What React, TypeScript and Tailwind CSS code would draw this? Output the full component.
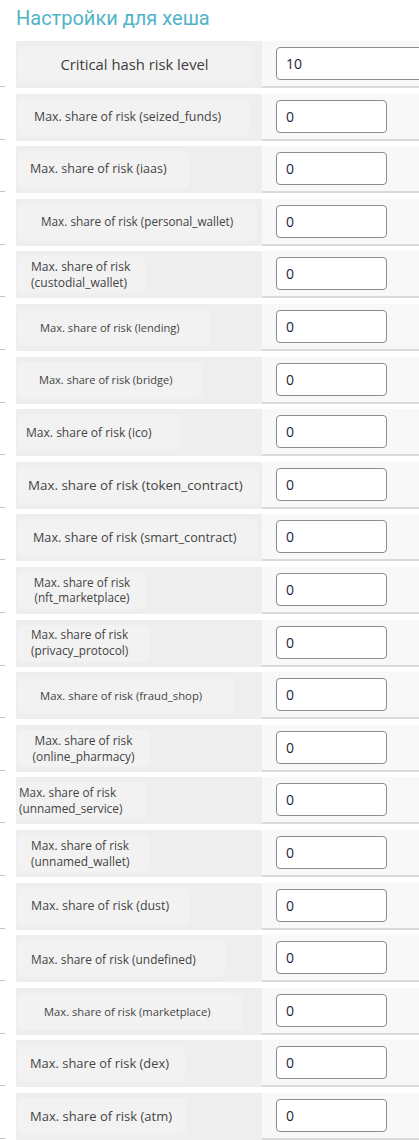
const rows: { label: string; two?: boolean; fs: number; pl: number; w: number; center?: boolean }[] = [
  { label: "Max. share of risk (seized_funds)", fs: 12.4, pl: 17, w: 232 },
  { label: "Max. share of risk (iaas)", fs: 12.5, pl: 13, w: 172 },
  { label: "Max. share of risk (personal_wallet)", fs: 11.75, pl: 24, w: 240 },
  { label: "Max. share of risk|(custodial_wallet)", two: true, fs: 12.05, pl: 14, w: 128 },
  { label: "Max. share of risk (lending)", fs: 11.15, pl: 23, w: 193 },
  { label: "Max. share of risk (bridge)", fs: 11.05, pl: 22, w: 186 },
  { label: "Max. share of risk (ico)", fs: 12.05, pl: 9, w: 163 },
  { label: "Max. share of risk (token_contract)", fs: 13.4, pl: 11, w: 242 },
  { label: "Max. share of risk (smart_contract)", fs: 12.65, pl: 16, w: 241 },
  { label: "Max. share of risk|(nft_marketplace)", two: true, fs: 11.7, pl: 17, w: 130, center: true },
  { label: "Max. share of risk|(privacy_protocol)", two: true, fs: 11.8, pl: 14, w: 132 },
  { label: "Max. share of risk (fraud_shop)", fs: 11.3, pl: 23, w: 218 },
  { label: "Max. share of risk|(online_pharmacy)", two: true, fs: 11.9, pl: 13, w: 133, center: true },
  { label: "Max. share of risk|(unnamed_service)", two: true, fs: 11.8, pl: 2, w: 130 },
  { label: "Max. share of risk|(unnamed_wallet)", two: true, fs: 11.9, pl: 14, w: 133 },
  { label: "Max. share of risk (dust)", fs: 12.4, pl: 14, w: 173 },
  { label: "Max. share of risk (undefined)", fs: 11.9, pl: 14, w: 208 },
  { label: "Max. share of risk (marketplace)", fs: 11.2, pl: 27, w: 226 },
  { label: "Max. share of risk (dex)", fs: 12.9, pl: 13, w: 168 },
  { label: "Max. share of risk (atm)", fs: 13, pl: 13, w: 170 },
];

function Row({ children, value, wide }: { children: React.ReactNode; value: string; wide?: boolean }) {
  return (
    <div className="flex h-[47px]">
      <div className="w-[5px] shrink-0 flex flex-col justify-end pb-[1px]">
        <div className="border-b border-[#c4c4c4]"></div>
      </div>
      <div className="w-[11px] shrink-0"></div>
      <div className="w-[246px] shrink-0 bg-[#eeeeee] py-[5px] pl-[1px]">{children}</div>
      <div className="flex-1 bg-[#f8f8f8] border-b-2 border-[#dadada] pl-[14px] pt-[6px]">
        <div
          className={`h-[33px] ${wide ? "w-[160px] rounded-l-[4px]" : "w-[111px] rounded-[4px]"} bg-white border border-[#8c8c8c] pl-[9px] flex items-center text-[14px] text-[#1c2636]`}
          style={{ fontFamily: '"Open Sans", sans-serif' }}
        >
          {value}
        </div>
      </div>
    </div>
  );
}

export default function App() {
  return (
    <div className="w-[419px] h-[1140px] overflow-hidden bg-white" style={{ fontFamily: '"Open Sans", sans-serif' }}>
      <h2
        className="pl-[16px] pt-[3px] h-[41px] text-[20px] leading-[30px] text-[#4fb4c8]"
        style={{ fontFamily: 'Roboto, "Noto Sans", sans-serif' }}
      >
        Настройки для хеша
      </h2>

      <div className="flex flex-col gap-[5.6px]">
        <Row value="10" wide>
          <div className="h-full w-[235px] rounded-[6px] bg-[#f2f2f2] flex items-center justify-center text-[14.8px] text-[#3d3d3d]">
            Critical hash risk level
          </div>
        </Row>

        {rows.map((r) => (
          <Row key={r.label} value="0">
            <div
              className={`h-full rounded-[6px] bg-[#f2f2f2] flex flex-col justify-center text-[#444] leading-[1.35] ${r.center ? "items-center" : "items-start"}`}
              style={{ width: r.w, paddingLeft: r.center ? 0 : r.pl, fontSize: r.fs }}
            >
              {r.two ? (
                <>
                  <span>{r.label.split("|")[0]}</span>
                  <span>{r.label.split("|")[1]}</span>
                </>
              ) : (
                <span className="whitespace-nowrap">{r.label}</span>
              )}
            </div>
          </Row>
        ))}
      </div>
    </div>
  );
}
